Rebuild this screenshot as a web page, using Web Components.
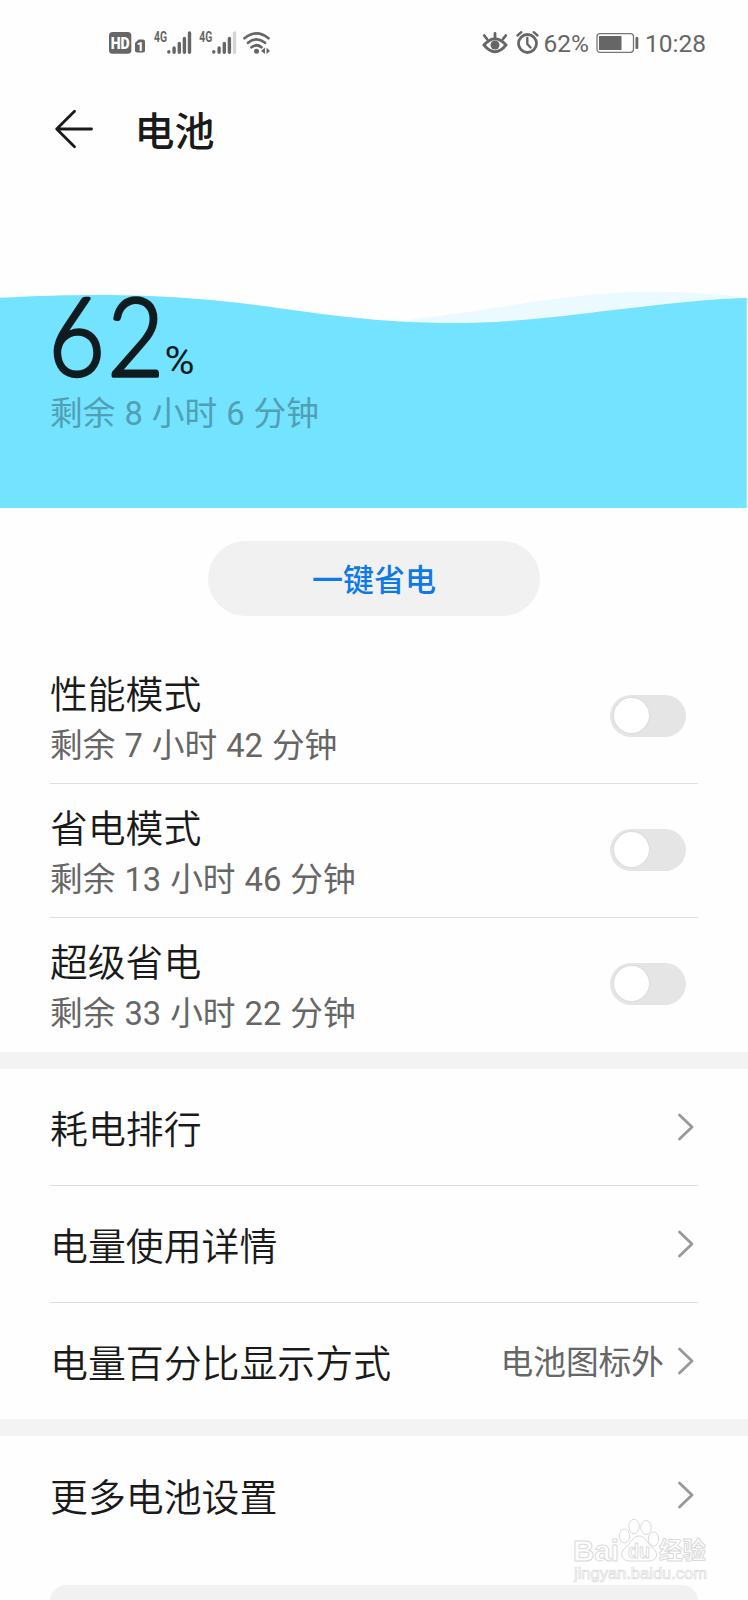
<!DOCTYPE html>
<html lang="zh-CN">
<head>
<meta charset="utf-8">
<title>电池</title>
<style>
    html, body { margin: 0; background: #fefefe; }
    body {
        width: 748px; height: 1600px; overflow: hidden; position: relative;
        font-family: Roboto, "Noto Sans CJK SC", sans-serif; color: #1a1a1a;
    }
</style>
</head>
<body>
<battery-page></battery-page>

<script>
class StatusBar extends HTMLElement {
    connectedCallback() {
        this.attachShadow({ mode: 'open' });
        this.shadowRoot.innerHTML = `
            <style>
                :host { display: flex; height: 88px; box-sizing: border-box; padding: 20px 42px 0 100px; align-items: flex-start; color: #666; font-size: 24.5px; }
                svg { display: block; flex: none; }
                .right { display: flex; margin-left: auto; }
                .right span { line-height: 47px; white-space: nowrap; }
                .battery { margin: 0 6px 0 7px; }
            </style>
            <svg width="180" height="45" viewBox="0 0 180 45" fill="#666">
                <rect x="9" y="12" width="22.3" height="21.7" rx="3.5"/>
                <text x="20.2" y="28.6" text-anchor="middle" font-family="Roboto" font-weight="900" font-size="16" fill="#fff" textLength="19" lengthAdjust="spacingAndGlyphs">HD</text>
                <path d="M38.5 19.5H43Q45 19.5 45 21.5V30.5Q45 32.5 43 32.5H37Q35 32.5 35 30.5V23Z"/>
                <text x="40.3" y="30.5" text-anchor="middle" font-weight="900" font-size="12" fill="#fff">1</text>
                <text x="54" y="21.8" font-weight="700" font-size="14.5" textLength="13" lengthAdjust="spacingAndGlyphs">4G</text>
                <text x="99.3" y="21.8" font-weight="700" font-size="14.5" textLength="13" lengthAdjust="spacingAndGlyphs">4G</text>
                <g stroke="#666" stroke-width="3.4" stroke-linecap="round">
                    <path d="M68.8 31.7V32M74.1 28V32.2M79.3 23.5V32.2M84.4 18.5V32.2M89.5 13V32.2"/>
                    <path d="M113.8 31.7V32M119.1 28V32.2M124.3 23.5V32.2M129.4 18.5V32.2"/>
                    <path d="M134.5 13V32.2" stroke="#d5d5d5"/>
                </g>
                <g fill="none" stroke="#666" stroke-width="2.7" stroke-linecap="round">
                    <path d="M144.5 18.2Q156.5 8.5 168.5 18.2"/>
                    <path d="M148 22.8Q156.5 16 165 22.8"/>
                    <path d="M151.5 27.2Q156.5 23.3 161.5 27.2"/>
                </g>
                <circle cx="156.5" cy="31.3" r="2.5"/>
                <path d="M161 31L165 27.5V34ZM170 31L166.5 27.5V34Z"/>
            </svg>
            <div class="right">
                <svg width="74" height="45" viewBox="0 0 74 45" fill="none" stroke="#666" stroke-width="2.8" stroke-linecap="round">
                    <path d="M14 25Q25 12.5 36 25Q25 38.5 14 25Z"/>
                    <circle cx="25" cy="25" r="4.5" fill="#666" stroke="none"/>
                    <path d="M25 13.5V17M14.2 15.5L17 19M35.8 15.5L33 19"/>
                    <circle cx="57.5" cy="23.5" r="9"/>
                    <path d="M57.3 18V24L60.5 27.5M47.5 15.5L51.3 12.2M67.5 15.5L63.7 12.2" stroke-width="2.4"/>
                </svg>
                <span>62%</span>
                <svg class="battery" width="43" height="45" viewBox="0 0 43 45" fill="none" stroke="#777" stroke-width="1.3">
                    <rect x="1" y="13.7" width="36.5" height="18.6" rx="3"/>
                    <rect x="3" y="16" width="22.5" height="14" fill="#666" stroke="none"/>
                    <rect x="39.5" y="17" width="2.8" height="12" rx="1" fill="#666" stroke="none"/>
                </svg>
                <span>10:28</span>
            </div>
        `;
    }
}
customElements.define('status-bar', StatusBar);

class PageHeader extends HTMLElement {
    connectedCallback() {
        this.attachShadow({ mode: 'open' });
        this.shadowRoot.innerHTML = `
            <style>
                :host { display: flex; align-items: center; height: 84px; padding-left: 54px; }
                svg { margin: -2px 40.5px 0 0; }
                h1 { margin: 6px 0 0; font-size: 40px; line-height: 84px; font-weight: 500; }
            </style>
            <svg width="40" height="40" viewBox="0 0 40 40" fill="none" stroke="#1a1a1a" stroke-width="2.8" stroke-linecap="round" stroke-linejoin="round">
                <path d="M20.5 2.2L2.7 20L20.5 37.8M2.7 20H37.5"/>
            </svg>
            <h1><slot></slot></h1>
        `;
    }
}
customElements.define('page-header', PageHeader);

class BatteryLevel extends HTMLElement {
    connectedCallback() {
        this.attachShadow({ mode: 'open' });
        this.shadowRoot.innerHTML = `
            <style>
                :host { display: grid; height: 336px; }
                svg, .remain { grid-area: 1 / 1; }
                svg { display: block; }
                .remain { align-self: end; padding: 0 0 69px 50px; font-size: 32.7px; line-height: 50px; word-spacing: .9px; color: #519fb3; }
            </style>
            <svg width="748" height="336" viewBox="0 172 748 336">
                <path d="M374 323.5C480 314 560 292 650 291.8Q700 291.8 746.7 297.5V340H374Z" fill="#eafaff"/>
                <path d="M0 297.8C150 289.5 230 301 300 311C420 328 490 325 580 314C640 307 700 299 746.7 298V508H0Z" fill="#73e3ff"/>
                <text transform="translate(48.5 375.5) scale(.9 1)" font-family="Lato" font-weight="300" font-size="108" letter-spacing="2.8" fill="#101c20" stroke="#101c20" stroke-width="3.4" stroke-linejoin="round">${this.getAttribute('level')}</text>
                <text x="164.5" y="373.5" font-size="39" fill="#101c20" textLength="30" lengthAdjust="spacingAndGlyphs">%</text>
            </svg>
            <div class="remain"><slot></slot></div>
        `;
    }
}
customElements.define('battery-level', BatteryLevel);

class PillButton extends HTMLElement {
    connectedCallback() {
        this.attachShadow({ mode: 'open' });
        this.shadowRoot.innerHTML = `
            <style>
                :host { display: flex; justify-content: center; padding: 33px 0 34px; }
                button {
                    width: 332px; height: 75px; border: 0; border-radius: 38px; padding: 0 0 2px;
                    background: #f1f1f1; color: #0f7ae5; font: 500 31px Roboto, "Noto Sans CJK SC", sans-serif;
                }
            </style>
            <button><slot></slot></button>
        `;
    }
}
customElements.define('pill-button', PillButton);

class ListSection extends HTMLElement {
    connectedCallback() {
        this.attachShadow({ mode: 'open' });
        this.shadowRoot.innerHTML = `
            <style>
                :host { display: block; padding: 0 50px; border-bottom: 17px solid #f3f3f3; }
                :host([last]) { border-bottom: 0; }
                ::slotted(*:not(:last-child)) { border-bottom: 1px solid #dedede; }
            </style>
            <slot></slot>
        `;
    }
}
customElements.define('list-section', ListSection);

class ModeRow extends HTMLElement {
    connectedCallback() {
        this.attachShadow({ mode: 'open' });
        this.shadowRoot.innerHTML = `
            <style>
                :host { display: flex; box-sizing: border-box; height: 134px; justify-content: space-between; padding: 18.5px 12px 0 0; }
                .title { font-size: 37.8px; line-height: 52px; font-weight: 350; }
                .sub { font-size: 32.7px; line-height: 50px; word-spacing: .9px; color: #666; }
                .toggle { width: 76px; height: 42px; margin-top: 26px; border-radius: 21px; background: #e5e5e5; box-sizing: border-box; padding: 3.5px; }
                .toggle::before { content: ""; display: block; width: 35px; height: 35px; border-radius: 50%; background: #fff; box-shadow: 0 0 2px rgba(0, 0, 0, .12); }
            </style>
            <div>
                <div class="title">${this.getAttribute('label')}</div>
                <div class="sub"><slot></slot></div>
            </div>
            <div class="toggle"></div>
        `;
    }
}
customElements.define('mode-row', ModeRow);

class LinkRow extends HTMLElement {
    connectedCallback() {
        this.attachShadow({ mode: 'open' });
        this.shadowRoot.innerHTML = `
            <style>
                :host { display: flex; box-sizing: border-box; height: 116.8px; align-items: center; padding-right: 4px; }
                .label { font-size: 37.9px; font-weight: 350; margin-top: -1px; }
                .value { margin: -3px 0 0 auto; font-size: 32.7px; color: #666; }
                svg { margin-left: 13px; }
            </style>
            <span class="label"><slot></slot></span>
            <span class="value">${this.getAttribute('value') || ''}</span>
            <svg width="17" height="30" viewBox="0 0 17 30" fill="none" stroke="#999" stroke-width="2.8" stroke-linecap="round" stroke-linejoin="round">
                <path d="M2.5 3L15 15L2.5 27"/>
            </svg>
        `;
    }
}
customElements.define('link-row', LinkRow);

class SiteMark extends HTMLElement {
    connectedCallback() {
        this.attachShadow({ mode: 'open' });
        this.shadowRoot.innerHTML = `
            <style>
                :host { position: absolute; left: 566px; top: 1514px; }
                svg { display: block; }
            </style>
            <svg width="148" height="72" viewBox="0 0 148 72" fill="#fff" stroke="#dadada" stroke-width="1" stroke-linejoin="round" font-family="Liberation Sans">
                <text x="7" y="46.5" font-size="30" font-weight="700" textLength="46" lengthAdjust="spacingAndGlyphs">Bai</text>
                <ellipse cx="58.5" cy="22" rx="5.2" ry="7"/>
                <ellipse cx="68" cy="12.5" rx="5.2" ry="7.3"/>
                <ellipse cx="80" cy="13.5" rx="5.2" ry="7"/>
                <ellipse cx="87.5" cy="25" rx="5.2" ry="7"/>
                <path d="M73 22C66 22 65 30 59 34C53 39 56 47 63 47H83C91 47 93 39 87 34C81 30 80 22 73 22Z"/>
                <text x="62" y="43.5" font-size="20" font-weight="700" textLength="22" lengthAdjust="spacingAndGlyphs">du</text>
                <text x="93" y="44.5" font-family="Noto Sans CJK SC" font-size="23.5" font-weight="700">经验</text>
                <text x="8" y="65" font-size="17" stroke-width=".7" textLength="133" lengthAdjust="spacingAndGlyphs">jingyan.baidu.com</text>
            </svg>
        `;
    }
}
customElements.define('site-mark', SiteMark);

class BatteryPage extends HTMLElement {
    connectedCallback() {
        this.attachShadow({ mode: 'open' });
        this.shadowRoot.innerHTML = `
            <style>
                :host { display: block; }
                .card { height: 40px; margin: 32px 50px 0; border-radius: 16px; background: #f1f1f1; }
            </style>
            <status-bar></status-bar>
            <page-header>电池</page-header>
            <battery-level level="62">剩余 8 小时 6 分钟</battery-level>
            <pill-button>一键省电</pill-button>
            <list-section>
                <mode-row label="性能模式">剩余 7 小时 42 分钟</mode-row>
                <mode-row label="省电模式">剩余 13 小时 46 分钟</mode-row>
                <mode-row label="超级省电">剩余 33 小时 22 分钟</mode-row>
            </list-section>
            <list-section>
                <link-row>耗电排行</link-row>
                <link-row>电量使用详情</link-row>
                <link-row value="电池图标外">电量百分比显示方式</link-row>
            </list-section>
            <list-section last>
                <link-row>更多电池设置</link-row>
            </list-section>
            <div class="card"></div>
            <site-mark></site-mark>
        `;
    }
}
customElements.define('battery-page', BatteryPage);
</script>
</body>
</html>
